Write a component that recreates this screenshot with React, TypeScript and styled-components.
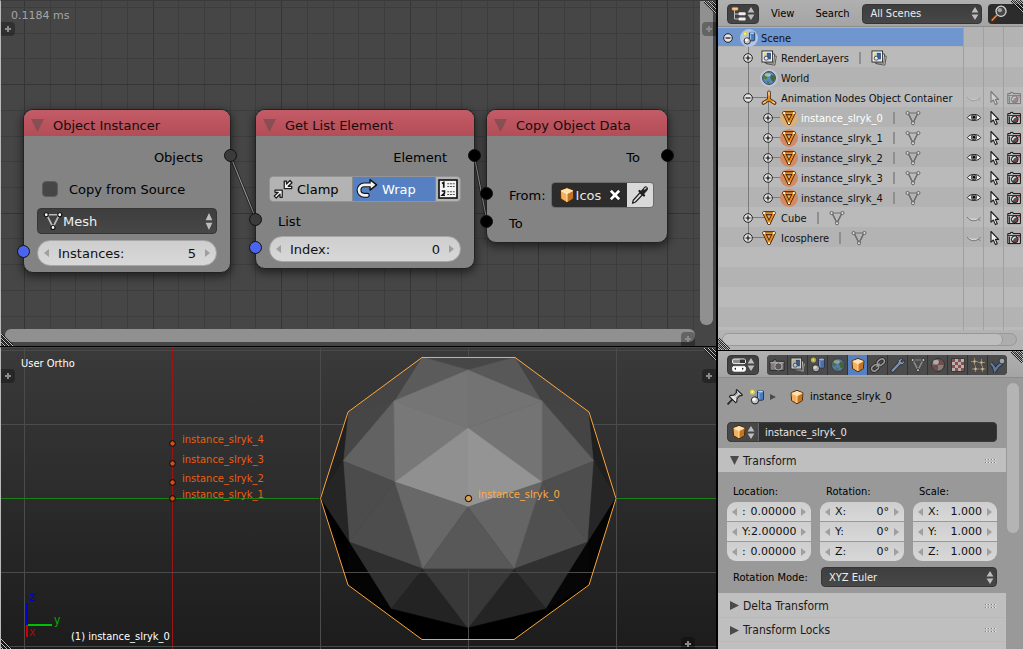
import React from "react";
import styled, { createGlobalStyle, css } from "styled-components";

const Global = createGlobalStyle`
  *, *::before, *::after { box-sizing: border-box; }
  body { margin: 0; background: #000; font-family: "DejaVu Sans Condensed", "DejaVu Sans", sans-serif; font-size: 11px; color: #000; }
  button, input, select { font: inherit; color: inherit; margin: 0; padding: 0; border: 0; background: none; }
  ul { list-style: none; margin: 0; padding: 0; }
  h2, h3, p { margin: 0; font-weight: normal; font-size: inherit; }
  svg { display: block; flex: none; }
`;

/* ---------- icons ---------- */

type IconProps = { size?: number };

const Svg = ({ size = 16, children }: IconProps & { children: React.ReactNode }) => (
  <svg width={size} height={size} viewBox="0 0 16 16" fill="none" aria-hidden="true">
    {children}
  </svg>
);

const CubeIcon = ({ size }: IconProps) => (
  <Svg size={size}>
    <path d="M8 1.4 13.9 3.8 13.4 11.6 8 14.8 2.6 11.6 2.1 3.8Z" fill="#e8963a" stroke="#4a2a08" strokeWidth="1" strokeLinejoin="round" />
    <path d="M8 1.9 13.4 4.1 8 6.8 2.6 4.1Z" fill="#ffe0b0" />
    <path d="M2.6 4.1 8 6.8V14.2L3.1 11.2Z" fill="#f6b05c" />
    <path d="M13.4 4.1 8 6.8V14.2L12.9 11.2Z" fill="#c4741c" />
    <path d="M2.8 4.2 8 6.9 13.2 4.2M8 6.9V14" stroke="#fff1d8" strokeWidth=".8" />
  </Svg>
);

const MeshIcon = ({ size, line = "#6e6e6e", dot = "#d8d8d8", edge = "#5e5e5e" }: IconProps & { line?: string; dot?: string; edge?: string }) => (
  <Svg size={size}>
    <path d="M3 3H13L8 13Z" stroke={line} strokeWidth="1.1" />
    <path d="M3 3 8 13 13 3" stroke={line} strokeWidth="1.3" />
    <circle cx="2.6" cy="3" r="1.6" fill={dot} stroke={edge} strokeWidth=".9" />
    <circle cx="13.4" cy="3" r="1.6" fill={dot} stroke={edge} strokeWidth=".9" />
    <circle cx="8" cy="13.2" r="1.6" fill={dot} stroke={edge} strokeWidth=".9" />
  </Svg>
);

const MeshObjectIcon = ({ size }: IconProps) => (
  <Svg size={size}>
    <path d="M2.4 2.4H13.6L8 14Z" stroke="#2e1600" strokeWidth="4" strokeLinejoin="round" />
    <path d="M2.4 2.4H13.6L8 14Z" stroke="#ee8f22" strokeWidth="2.2" strokeLinejoin="round" />
    <path d="M5.4 4.6H10.6L8 9.8Z" fill="#d8b48c" stroke="#6b3400" strokeWidth=".8" />
    <path d="M2.4 2.4h.01M13.6 2.4h.01M8 14h.01" stroke="#fff" strokeWidth="2.4" strokeLinecap="round" />
  </Svg>
);

const SceneIcon = ({ size }: IconProps) => (
  <Svg size={size}>
    <path d="M8.5 2.2C9.5 1.2 13.5 1.2 14.5 2.2V10.6C13.5 11.6 9.5 11.6 8.5 10.6Z" fill="#4a7cc4" stroke="#1c2f4e" strokeWidth=".9" />
    <ellipse cx="11.5" cy="2.4" rx="2.6" ry="1" fill="#b9d2f2" />
    <path d="M9.8 4V10.4" stroke="#9dbfee" strokeWidth="1.2" />
    <circle cx="3.4" cy="3" r="1.8" fill="#fdfde0" stroke="#d8d23a" strokeWidth="1.5" />
    <circle cx="6" cy="11.4" r="3.6" fill="#c6c6c6" stroke="#1d1d1d" strokeWidth="1" />
    <circle cx="5" cy="10.3" r="1.7" fill="#fff" />
  </Svg>
);

const LayersIcon = ({ size }: IconProps) => (
  <Svg size={size}>
    <path d="M6 5 15.3 6.2 13.8 15.2 5 13.6Z" fill="#e8e4d4" stroke="#333" strokeWidth=".8" />
    <path d="M4 3.4 13.6 4 12.8 13.2 4 12.8Z" fill="#f1efe4" stroke="#333" strokeWidth=".8" />
    <rect x="1" y="1" width="10.6" height="11" fill="#fff" stroke="#222" strokeWidth=".9" />
    <rect x="2.5" y="2.5" width="7.6" height="8" fill="#b6c8df" />
    <rect x="6.5" y="3.2" width="3" height="5.6" fill="#2f61a8" stroke="#16284a" strokeWidth=".5" />
    <circle cx="5.2" cy="8.2" r="2" fill="#eee" stroke="#222" strokeWidth=".7" />
    <circle cx="3.8" cy="3.8" r="1.2" fill="#f2e548" />
  </Svg>
);

const WorldIcon = ({ size }: IconProps) => (
  <Svg size={size}>
    <circle cx="8" cy="8" r="6.4" fill="#5a8cc4" stroke="#22364f" strokeWidth=".9" />
    <path d="M3 4.4C4.6 2.6 7 2 8.6 2.4L8 4.6 5.8 6.2 6.4 8.4 4.6 9.4 2 7.4Z" fill="#4f7a3c" />
    <path d="M10 5 13.4 5.2 14.2 8.4 12.4 11.8 10.6 10.8 9.2 7.6Z" fill="#436b35" />
    <path d="M5.4 10.4 8.4 11 8 13.9 6.2 13.4Z" fill="#557f42" />
    <ellipse cx="6.6" cy="4.8" rx="3" ry="1.8" fill="#fff" opacity=".5" />
  </Svg>
);

const EmptyIcon = ({ size }: IconProps) => (
  <Svg size={size}>
    <path d="M8 2.2V9.4L2.4 13M8 9.4 13.6 13" stroke="#3a1c00" strokeWidth="3.4" strokeLinecap="round" />
    <path d="M8 2.2V9.4L2.4 13M8 9.4 13.6 13" stroke="#e98a1e" strokeWidth="2" strokeLinecap="round" />
    <path d="M8 2.2V5M2.8 12.8 4.4 11.8M13.2 12.8 11.6 11.8" stroke="#ffdba6" strokeWidth="1.2" strokeLinecap="round" />
  </Svg>
);

const EyeIcon = ({ open }: { open: boolean }) => (
  <Svg size={16}>
    {open ? (
      <>
        <path d="M1.4 7.6C4 3.4 12 3.4 14.6 7.6 12 11.4 4 11.4 1.4 7.6Z" fill="#f4f4f4" stroke="#222" strokeWidth="1" />
        <circle cx="8" cy="7.2" r="2.7" fill="#8a8a8a" stroke="#222" strokeWidth=".7" />
        <circle cx="8" cy="7.2" r="1.3" fill="#000" />
      </>
    ) : (
      <>
        <path d="M1.5 7C4 9 12 9 14.5 7 12.8 11.4 4 12 1.5 7Z" fill="#d2d2d2" />
        <path d="M1.2 7C4 12 11 12 14.6 7M12.4 9.4 14.4 10.6" stroke="#747474" strokeWidth="1" />
      </>
    )}
  </Svg>
);

const PointerIcon = () => (
  <Svg size={16}>
    <path d="M5 1.5V12.2L7.4 10 9.4 14.6 11.3 13.8 9.4 9.4H12.6Z" fill="#efefef" stroke="#1c1c1c" strokeWidth="1.1" strokeLinejoin="round" />
  </Svg>
);

const RenderIcon = () => (
  <Svg size={16}>
    <path d="M1.8 3.6H4.5V2.4H7V3.6H14.4V13.6H1.8Z" fill="#cdcdcd" stroke="#111" strokeWidth="1" />
    <path d="M2 5.4H14.4" stroke="#222" strokeWidth="1" />
    <path d="M3.4 6.5V13" stroke="#333" strokeWidth="1.3" />
    <circle cx="8.8" cy="9.4" r="3.4" fill="#4e4e4e" stroke="#111" strokeWidth=".8" />
    <path d="M6.8 10.4A2.4 2.4 0 0 1 9.8 7.4" stroke="#d6e2ee" strokeWidth="1.5" />
    <circle cx="10.2" cy="10.6" r="1" fill="#a33" />
    <circle cx="13" cy="6.8" r=".9" fill="#d02020" />
  </Svg>
);

const CameraTabIcon = () => (
  <Svg size={16}>
    <path d="M1 4.4H4L5 2.6H7L7.6 4.4H15V13.4H1Z" fill="#8f8f8f" stroke="#161616" strokeWidth=".9" />
    <path d="M1.4 4.9H14.6V6.4H1.4Z" fill="#c2c2c2" />
    <circle cx="9.4" cy="9.4" r="3.6" fill="#5a5a5a" stroke="#d0d0d0" strokeWidth="1" />
    <circle cx="9.4" cy="9.4" r="1.6" fill="#8a5050" />
  </Svg>
);

const ChainIcon = () => (
  <Svg size={16}>
    <g stroke="#1d1d1d" strokeWidth="3.2">
      <rect x="7.2" y="2.6" width="7.4" height="5" rx="2.5" transform="rotate(-38 10.9 5.1)" />
      <rect x="1.4" y="8.4" width="7.4" height="5" rx="2.5" transform="rotate(-38 5.1 10.9)" />
    </g>
    <g stroke="#b3b3b3" strokeWidth="1.5">
      <rect x="7.2" y="2.6" width="7.4" height="5" rx="2.5" transform="rotate(-38 10.9 5.1)" />
      <rect x="1.4" y="8.4" width="7.4" height="5" rx="2.5" transform="rotate(-38 5.1 10.9)" />
      <path d="M6.4 9.8 9.6 6.4" />
    </g>
  </Svg>
);

const WrenchIcon = () => (
  <Svg size={16}>
    <path d="M2.6 13.6 8.6 7.2" stroke="#1a2330" strokeWidth="4" strokeLinecap="round" />
    <path d="M13 1.8 10.8 4.2 12 5.4 14.4 3.2C15.2 5.4 13.6 8 11 7.8 8.4 7.6 7.4 5.6 8.4 3.6 9.4 1.8 11.4 1.2 13 1.8Z" fill="#9cb4d4" stroke="#1a2330" strokeWidth=".9" />
    <path d="M2.6 13.6 9.2 6.6" stroke="#8ba5c8" strokeWidth="2.4" strokeLinecap="round" />
  </Svg>
);

const MaterialIcon = () => (
  <Svg size={16}>
    <circle cx="8" cy="8" r="6.3" fill="#9a8c8c" stroke="#161616" strokeWidth=".9" />
    <path d="M8 1.9A6.1 6.1 0 0 1 14.1 8H8ZM8 8V14.1A6.1 6.1 0 0 1 1.9 8Z" fill="#7d4c4c" />
    <ellipse cx="6" cy="5" rx="3" ry="2.2" fill="#e6e6e6" opacity=".7" />
  </Svg>
);

const TextureIcon = () => (
  <Svg size={16}>
    <rect x="1.6" y="1.6" width="12.8" height="12.8" fill="#d9d2d0" stroke="#222" strokeWidth=".8" />
    {[0, 1, 2, 3].map((r) =>
      [0, 1].map((c) => <rect key={`${r}${c}`} x={2 + c * 6 + (r % 2) * 3} y={2 + r * 3} width="3" height="3" fill="#a2504c" />),
    )}
  </Svg>
);

const ParticlesIcon = () => (
  <Svg size={16}>
    <path d="M4.5 1V8M1 4.5H8M11.5 2V9M8 5.5H15M5.5 8.5V15M2 12H9M12.5 8.8V15M9.6 12H15.6" stroke="#b49a6a" strokeWidth="1.1" />
    <path d="M4.5 3.4V5.6M11.5 4.4V6.6M5.5 11V13M12.5 11V13" stroke="#efe2bd" strokeWidth="2" />
  </Svg>
);

const PhysicsIcon = () => (
  <Svg size={16}>
    <path d="M1 6.4C3 8 4.4 11 5 13.4 7 9.6 9.4 7.6 12 6" stroke="#16202e" strokeWidth="4" />
    <path d="M1 6.4C3 8 4.4 11 5 13.2 7 9.6 9.4 7.6 12 6" stroke="#6488b4" strokeWidth="2.4" />
    <circle cx="12" cy="4" r="2.9" fill="#b4bfcb" stroke="#1b1b1b" strokeWidth=".8" />
  </Svg>
);

const PinIcon = () => (
  <Svg size={18}>
    <path d="M1.4 14.6 6 9.8" stroke="#222" strokeWidth="1.5" />
    <path d="M9.6 1.4 14.6 6.2 13.4 7 12.4 6.6 9.8 9.4 9.6 12.2 8.6 13 3 7.6 4 6.6 7 6.4 9.4 3.8 9 2.4Z" fill="#e4e4e4" stroke="#1f1f1f" strokeWidth="1" strokeLinejoin="round" />
    <path d="M7.6 7.2 10.6 4.2M8.8 9 11.8 5.8" stroke="#8a8a8a" strokeWidth=".9" />
  </Svg>
);

const MagnifierIcon = () => (
  <Svg size={18}>
    <path d="M1.8 14 6.4 9" stroke="#56290f" strokeWidth="3.2" strokeLinecap="round" />
    <path d="M2 13.4 5.6 9.6" stroke="#e08a5c" strokeWidth="1.4" strokeLinecap="round" />
    <circle cx="9.8" cy="5.6" r="4.5" fill="#474747" stroke="#dadada" strokeWidth="1.1" />
    <circle cx="8.8" cy="4.6" r="1.9" fill="#a4a4a4" />
  </Svg>
);

const OutlinerIcon = () => (
  <Svg size={16}>
    <path d="M3.5 4V13M3.5 8H8M3.5 13H8" stroke="#bdbdbd" strokeWidth="1" />
    <rect x="1" y="1.4" width="6" height="2.8" rx="1" fill="#ffc489" stroke="#d98a3a" strokeWidth=".5" />
    <rect x="7.6" y="6.2" width="7" height="3" rx="1" fill="#efefef" />
    <rect x="7.6" y="11.4" width="7" height="3" rx="1" fill="#efefef" />
  </Svg>
);

const PropertiesIcon = () => (
  <Svg size={16}>
    <rect x="1.5" y="2" width="13" height="4.6" rx="1.6" fill="#8e8e8e" stroke="#f0f0f0" strokeWidth="1" />
    <rect x="9" y="2.6" width="5" height="3.4" fill="#333" />
    <rect x="1.5" y="9.4" width="13" height="4.8" rx="1.6" fill="#fff" stroke="#f0f0f0" strokeWidth="1" />
    <path d="M3.2 11.8 5 10.6V13ZM12.8 11.8 11 10.6V13Z" fill="#222" />
  </Svg>
);

const ClampIcon = () => (
  <Svg size={20}>
    <g stroke="#1d1d1d" strokeWidth="1" fill="#f2f2f2" strokeLinejoin="round">
      <path d="M9 1.6V7.6H15V5.8H12.2L15.2 3 13.6 1.2 10.8 4V1.6Z" />
      <path d="M7.4 14.6V8.8H1.6V10.6H4.2L1 13.6 2.6 15.2 5.6 12.2V14.6Z" />
    </g>
  </Svg>
);

const WrapIcon = () => (
  <Svg size={22}>
    <path d="M12 5H6A3.8 3.8 0 0 0 6 12.6H8.2" stroke="#111" strokeWidth="3.6" strokeLinecap="round" />
    <path d="M10.2 1.2 15 5 10.2 8.8Z" fill="#f2f2f2" stroke="#111" strokeWidth="1" strokeLinejoin="round" />
    <path d="M12 5H6A3.8 3.8 0 0 0 6 12.6H8.2" stroke="#f2f2f2" strokeWidth="2" strokeLinecap="round" />
  </Svg>
);

const NumberedListIcon = () => (
  <Svg size={20}>
    <rect x=".8" y=".8" width="14.4" height="14.4" fill="#f4f4f4" stroke="#111" strokeWidth="1.3" />
    <path d="M3.2 3.6 4.6 2.8V7M3 9.6H5.2V11.2L3.4 13H5.6" stroke="#111" strokeWidth="1.3" />
    <path d="M7.4 3.8H13.4M7.4 6H13.4M7.4 10.2H13.4M7.4 12.4H13.4" stroke="#555" strokeWidth=".9" strokeDasharray="1.6 .6" />
  </Svg>
);

const CrossIcon = () => (
  <Svg size={16}>
    <path d="M4 4 12 12M12 4 4 12" stroke="#000" strokeWidth="4.2" />
    <path d="M3.8 3.8 12.2 12.2M12.2 3.8 3.8 12.2" stroke="#fff" strokeWidth="2.8" />
  </Svg>
);

const EyedropperIcon = () => (
  <Svg size={20}>
    <path d="M2 14.6 2.6 12.2 8.2 6 10 7.8 4.4 13.6Z" fill="#e4e4e4" stroke="#222" strokeWidth="1" strokeLinejoin="round" />
    <path d="M7.6 4.8 11.2 8.4" stroke="#1c1c1c" strokeWidth="1.8" strokeLinecap="round" />
    <path d="M9.8 6.2 12.6 3" stroke="#222" strokeWidth="3.6" strokeLinecap="round" />
    <path d="M11.6 3.2 12.8 2.4" stroke="#ccc" strokeWidth="1.1" strokeLinecap="round" />
  </Svg>
);

const UpDownIcon = ({ tall }: { tall?: boolean }) => (
  <svg width="8" height={tall ? 17 : 13} viewBox="0 0 8 14" preserveAspectRatio="none" aria-hidden="true">
    <path d="M4 0 7.4 6H.6ZM4 14 7.4 8H.6Z" fill="#bdbdbd" />
  </svg>
);

const Arrow = ({ right }: { right?: boolean }) => (
  <svg width="5" height="8" viewBox="0 0 5 8" aria-hidden="true">
    <path d={right ? "M0 0 5 4 0 8Z" : "M5 0 0 4 5 8Z"} fill="#9f9f9f" />
  </svg>
);

const Triangle = ({ open, size = 10 }: { open?: boolean; size?: number }) => (
  <svg width={size} height={size} viewBox="0 0 10 10" aria-hidden="true">
    <path d={open ? "M0 0H10L5 10Z" : "M0 0 10 5 0 10Z"} fill="#4a4a4a" />
  </svg>
);

const ToggleIcon = ({ open }: { open: boolean }) => (
  <svg width="10" height="10" viewBox="0 0 10 10" aria-hidden="true">
    <circle cx="5" cy="5" r="4.3" fill="#e6e6e6" stroke="#1d1d1d" strokeWidth="1" />
    <path d={open ? "M2.5 5H7.5" : "M2.5 5H7.5M5 2.5V7.5"} stroke="#111" strokeWidth="1.2" />
  </svg>
);

const GripIcon = () => (
  <svg width="11" height="4" viewBox="0 0 11 4" aria-hidden="true">
    {[0, 3, 6, 9].map((x) => (
      <g key={x}>
        <path d={`M${x} .5H${x + 1}M${x} 3.5H${x + 1}`} stroke="#7d7d7d" />
        <path d={`M${x + 1} .5H${x + 2}M${x + 1} 3.5H${x + 2}`} stroke="#ececec" />
      </g>
    ))}
  </svg>
);

/* ---------- page frame ---------- */

const Screen = styled.main`
  display: grid;
  grid-template-columns: minmax(0, 1fr) 305px;
  column-gap: 2px;
  min-height: 100vh;
`;

const Column = styled.div<{ $rows: string }>`
  display: grid;
  grid-template-rows: ${(p) => p.$rows};
  row-gap: 1px;
  min-width: 0;
`;

const Area = styled.section`
  position: relative;
  overflow: hidden;
`;

const CornerSvg = styled.svg<{ $at: "tr" | "bl" }>`
  position: absolute;
  z-index: 3;
  ${(p) => (p.$at === "tr" ? "top: 0; right: 0;" : "bottom: 0; left: 0;")}
`;

const Corner = ({ at }: { at: "tr" | "bl" }) => (
  <CornerSvg $at={at} width="12" height="12" viewBox="0 0 12 12" aria-hidden="true">
    {(at === "tr" ? ["M0 0 12 12", "M4 0 12 8", "M8 0 12 4"] : ["M0 0 12 12", "M0 4 8 12", "M0 8 4 12"]).map((d) => (
      <g key={d}>
        <path d={d} stroke="#111" strokeWidth="2" />
        <path d={d} stroke="#c4c4c4" strokeWidth="1" />
      </g>
    ))}
  </CornerSvg>
);

const PlusButton = styled.button<{ $side: "left" | "right" | "bottom" }>`
  position: absolute;
  z-index: 2;
  display: grid;
  place-items: center;
  width: 14px;
  height: 14px;
  background: rgba(0, 0, 0, 0.3);
  border-radius: ${(p) => (p.$side === "left" ? "0 4px 4px 0" : p.$side === "right" ? "4px 0 0 4px" : "4px 4px 0 0")};
  ${(p) => p.$side === "left" && "left: 0; top: 21px;"}
  ${(p) => p.$side === "right" && "right: 0; top: 21px;"}
  ${(p) => p.$side === "bottom" && "right: 21px; bottom: 0;"}
`;

const Plus = ({ side }: { side: "left" | "right" | "bottom" }) => (
  <PlusButton $side={side} type="button" aria-label="Show region">
    <svg width="6" height="6" viewBox="0 0 6 6" aria-hidden="true">
      <path d="M3 0V6M0 3H6" stroke="#8a8a8a" strokeWidth="2" />
    </svg>
  </PlusButton>
);

/* ---------- node editor ---------- */

const NodeArea = styled(Area)`
  display: grid;
  grid-template-columns: minmax(0, 1fr) 16px;
  grid-template-rows: minmax(0, 1fr) 17px;
  background: #464646;
  border-left: 1px solid #b9b9b9;
  border-top: 1px solid #3a3a3a;
`;

const Canvas = styled.div`
  position: relative;
  overflow: hidden;
`;

const CanvasDrawing = styled.svg`
  position: absolute;
  inset: 0;
  width: 100%;
  height: 100%;
`;

const Timing = styled.p`
  position: absolute;
  left: 10px;
  top: 8px;
  font-family: "DejaVu Sans", sans-serif;
  line-height: 14px;
  color: #a5a5a5;
`;

const VerticalBar = styled.div`
  margin: 0 3px 4px 0;
  background: #909090;
  border-radius: 0 0 6px 6px;
`;

const HorizontalBar = styled.div`
  margin: 0 5px 4px 4px;
  background: #909090;
  border-radius: 6px;
`;

const NodeCard = styled.article<{ $x: number; $width: number }>`
  position: absolute;
  top: 108px;
  left: ${(p) => p.$x}px;
  width: ${(p) => p.$width}px;
  font-family: "DejaVu Sans", sans-serif;
  font-size: 13px;
  background: #838383;
  border: 1px solid #222;
  border-radius: 10px;
  box-shadow: 0 3px 8px 1px rgba(0, 0, 0, 0.5);
`;

const NodeHeader = styled.header`
  display: flex;
  align-items: center;
  gap: 9px;
  height: 26px;
  padding: 5px 7px 0;
  color: #1a0a0b;
  background: linear-gradient(#c35c66, #bb545e 50%, #b34d57);
  border-radius: 9px 9px 0 0;
  svg { opacity: 0.45; }
`;

const NodeTitle = styled.h2`
  line-height: 16px;
`;

const NodeBody = styled.div`
  display: flex;
  flex-direction: column;
  gap: 6px;
  padding: 8px 13px 6px;
`;

const NodeGroup = styled.div<{ $spaced?: boolean }>`
  display: flex;
  flex-direction: column;
  gap: 2px;
  padding-top: ${(p) => (p.$spaced ? 6 : 0)}px;
`;

const NodeRow = styled.div<{ $kind?: "output" | "input" | "check" }>`
  position: relative;
  display: flex;
  align-items: center;
  height: 26px;
  ${(p) => p.$kind === "output" && "justify-content: flex-end; padding-right: 14px;"}
  ${(p) => p.$kind === "input" && "padding-left: 9px;"}
  ${(p) => p.$kind === "check" && "padding-left: 5px; gap: 11px;"}
`;

const Socket = styled.span<{ $side: "in" | "out"; $color: string }>`
  position: absolute;
  top: 5px;
  ${(p) => (p.$side === "in" ? "left: -20px;" : "right: -20px;")}
  width: 13px;
  height: 13px;
  background: ${(p) => p.$color};
  border: 1px solid #111;
  border-radius: 50%;
`;

const CheckBox = styled.input`
  appearance: none;
  width: 16px;
  height: 16px;
  background: #464646;
  border: 1px solid #5c5c5c;
  border-radius: 4px;
`;

const darkWidget = css`
  background: linear-gradient(#3e3e3e, #474747);
  border: 1px solid #353535;
  color: #eee;
`;

const SelectBox = styled.div<{ $large?: boolean }>`
  position: relative;
  flex: 1;
  display: flex;
  align-items: center;
  height: ${(p) => (p.$large ? 26 : 20)}px;
  padding: 0 ${(p) => (p.$large ? 3 : 2)}px 0 ${(p) => (p.$large ? 5 : 7)}px;
  border-radius: 4px;
  ${darkWidget}
  select { flex: 1; min-width: 0; appearance: none; outline: 0; height: 100%; }
`;

const NumberField = styled.label<{ $large?: boolean; $place?: "top" | "middle" | "bottom" }>`
  flex: 1 0 auto;
  display: flex;
  align-items: center;
  gap: ${(p) => (p.$large ? 9 : 5)}px;
  min-width: 0;
  height: ${(p) => (p.$large ? 26 : 19)}px;
  padding: 0 ${(p) => (p.$large ? 6 : 5)}px;
  font-family: "DejaVu Sans", sans-serif;
  color: #111;
  background: linear-gradient(#cecece, #d8d8d8);
  border: ${(p) => (p.$large ? "1px solid #a6a6a6" : 0)};
  border-radius: ${(p) => (p.$large ? "13px" : p.$place === "top" ? "9px 9px 0 0" : p.$place === "bottom" ? "0 0 9px 9px" : 0)};
`;

const FieldText = styled.span`
  flex: 1;
  display: flex;
  min-width: 0;
  input { flex: 1; width: 0; min-width: 0; text-align: right; outline: 0; }
`;

const ButtonGroup = styled.div`
  flex: 1;
  display: flex;
  height: 26px;
  border: 1px solid #949494;
  border-radius: 4px;
  overflow: hidden;
`;

const ChoiceButton = styled.button<{ $active?: boolean; $narrow?: boolean }>`
  display: flex;
  align-items: center;
  gap: 4px;
  ${(p) => (p.$narrow ? "width: 25px; justify-content: center;" : "flex: 1; padding-left: 3px;")}
  color: ${(p) => (p.$active ? "#fff" : "#000")};
  background: ${(p) => (p.$active ? "#5680c2" : "#b3b3b3")};
  & + & { border-left: 1px solid #8a8a8a; }
`;

const DataField = styled.div`
  flex: 1;
  display: flex;
  min-width: 0;
  height: 26px;
  margin-left: 5px;
  border: 1px solid #6a6a6a;
  border-radius: 4px;
  overflow: hidden;
`;

const DataName = styled.div`
  flex: 1;
  display: flex;
  align-items: center;
  min-width: 0;
  padding: 0 4px 0 6px;
  color: #e6e6e6;
  background: #2c2c2c;
  input { flex: 1; width: 0; min-width: 0; outline: 0; }
`;

const PickButton = styled.button`
  display: grid;
  place-items: center;
  width: 26px;
  background: #d9d9d9;
`;

const NumberInput = ({ label, value, large, place }: { label: string; value: string; large?: boolean; place?: "top" | "middle" | "bottom" }) => (
  <NumberField $large={large} $place={place}>
    <Arrow />
    <FieldText>
      {label}
      <input type="text" defaultValue={value} />
    </FieldText>
    <Arrow right />
  </NumberField>
);

const gridX = Array.from({ length: 80 }, (_, i) => ({ at: Math.round(23 + i * 25.72), major: i % 5 === 0 }));
const gridY = Array.from({ length: 60 }, (_, i) => ({ at: Math.round(6 + i * 25.72), major: i % 5 === 3 }));

const NodeEditor = () => (
  <NodeArea aria-label="Node editor">
    <Canvas>
      <CanvasDrawing aria-hidden="true">
        <g stroke="#3d3d3d" shapeRendering="crispEdges">
          {gridX.map((l) => (
            <line key={l.at} x1={l.at + 0.5} x2={l.at + 0.5} y1="0" y2="100%" stroke={l.major ? "#353535" : undefined} />
          ))}
          {gridY.map((l) => (
            <line key={l.at} y1={l.at + 0.5} y2={l.at + 0.5} x1="0" x2="100%" stroke={l.major ? "#353535" : undefined} />
          ))}
        </g>
        <path d="M229 154 255 218M473 154 486 220" stroke="#2c2c2c" strokeWidth="3" />
        <path d="M229 154 255 218M473 154 486 220" stroke="#a0a0a0" strokeWidth="1" />
      </CanvasDrawing>
      <Timing>0.1184 ms</Timing>

      <NodeCard $x={22} $width={208}>
        <NodeHeader>
          <Triangle open size={13} />
          <NodeTitle>Object Instancer</NodeTitle>
        </NodeHeader>
        <NodeBody>
          <NodeRow $kind="output">
            Objects
            <Socket $side="out" $color="#3b3b3b" />
          </NodeRow>
          <NodeRow $kind="check">
            <CheckBox type="checkbox" id="copy-source" />
            <label htmlFor="copy-source">Copy from Source</label>
          </NodeRow>
          <NodeRow>
            <SelectBox $large>
              <MeshIcon size={20} line="#b8b8b8" dot="#fff" edge="#111" />
              <select aria-label="Object type" defaultValue="Mesh">
                <option>Mesh</option>
              </select>
              <UpDownIcon tall />
            </SelectBox>
          </NodeRow>
          <NodeRow>
            <Socket $side="in" $color="#4a63f2" />
            <NumberInput large label="Instances:" value="5" />
          </NodeRow>
        </NodeBody>
      </NodeCard>

      <NodeCard $x={254} $width={220}>
        <NodeHeader>
          <Triangle open size={13} />
          <NodeTitle>Get List Element</NodeTitle>
        </NodeHeader>
        <NodeBody>
          <NodeRow $kind="output">
            Element
            <Socket $side="out" $color="#000" />
          </NodeRow>
          <NodeRow>
            <ButtonGroup>
              <ChoiceButton type="button">
                <ClampIcon />
                Clamp
              </ChoiceButton>
              <ChoiceButton type="button" $active>
                <WrapIcon />
                Wrap
              </ChoiceButton>
              <ChoiceButton type="button" $narrow aria-label="Index list">
                <NumberedListIcon />
              </ChoiceButton>
            </ButtonGroup>
          </NodeRow>
          <NodeGroup>
            <NodeRow $kind="input">
              <Socket $side="in" $color="#3b3b3b" />
              List
            </NodeRow>
            <NodeRow>
              <Socket $side="in" $color="#4a63f2" />
              <NumberInput large label="Index:" value="0" />
            </NodeRow>
          </NodeGroup>
        </NodeBody>
      </NodeCard>

      <NodeCard $x={485} $width={182}>
        <NodeHeader>
          <Triangle open size={13} />
          <NodeTitle>Copy Object Data</NodeTitle>
        </NodeHeader>
        <NodeBody>
          <NodeRow $kind="output">
            To
            <Socket $side="out" $color="#000" />
          </NodeRow>
          <NodeGroup $spaced>
            <NodeRow $kind="input">
              <Socket $side="in" $color="#000" />
              <label htmlFor="from-object">From:</label>
              <DataField>
                <DataName>
                  <CubeIcon size={18} />
                  <input id="from-object" type="text" defaultValue="Icos" />
                  <button type="button" aria-label="Clear object">
                    <CrossIcon />
                  </button>
                </DataName>
                <PickButton type="button" aria-label="Pick object">
                  <EyedropperIcon />
                </PickButton>
              </DataField>
            </NodeRow>
            <NodeRow $kind="input">
              <Socket $side="in" $color="#000" />
              To
            </NodeRow>
          </NodeGroup>
        </NodeBody>
      </NodeCard>
    </Canvas>
    <VerticalBar />
    <HorizontalBar />
    <Plus side="left" />
    <Plus side="right" />
    <Plus side="bottom" />
    <Corner at="bl" />
    <Corner at="tr" />
  </NodeArea>
);

/* ---------- 3D view ---------- */

const ViewArea = styled(Area)`
  background: linear-gradient(#3a3a3a, #1c1c1c);
  border-left: 1px solid #b9b9b9;
  border-top: 1px solid #4a4a4a;
`;

const ViewText = styled.p<{ $x: number; $y: number; $color?: string }>`
  position: absolute;
  left: ${(p) => p.$x}px;
  top: ${(p) => p.$y}px;
  line-height: 14px;
  color: ${(p) => p.$color ?? "#fff"};
  white-space: nowrap;
`;

const AxisText = styled.text`
  font-size: 12px;
`;

const faces: [string, string][] = [
  ["422,357 515,357 468,370", "#474747"],
  ["422,357 468,370 394,401", "#5b5b5b"],
  ["515,357 468,370 542,401", "#585858"],
  ["422,357 394,401 348,412", "#454545"],
  ["515,357 542,401 589,412", "#434343"],
  ["348,412 394,401 343,461", "#464646"],
  ["589,412 542,401 594,461", "#444444"],
  ["348,412 343,461 320,498", "#202020"],
  ["589,412 594,461 616,498", "#1f1f1f"],
  ["343,461 394,401 395,482", "#626262"],
  ["594,461 542,401 542,482", "#606060"],
  ["394,401 468,370 468,428", "#757575"],
  ["542,401 468,370 468,428", "#737373"],
  ["394,401 468,428 395,482", "#787878"],
  ["542,401 468,428 542,482", "#747474"],
  ["468,428 468,507 395,482", "#909090"],
  ["468,428 468,507 542,482", "#949494"],
  ["343,461 395,482 349,542", "#4c4c4c"],
  ["594,461 542,482 588,542", "#4e4e4e"],
  ["395,482 349,542 423,569", "#4d4d4d"],
  ["542,482 588,542 514,569", "#505050"],
  ["395,482 468,507 423,569", "#686868"],
  ["542,482 468,507 514,569", "#656565"],
  ["468,507 423,569 514,569", "#585858"],
  ["320,498 343,461 349,542", "#252525"],
  ["616,498 594,461 588,542", "#262626"],
  ["320,498 349,542 348,585", "#000000"],
  ["616,498 588,542 589,585", "#040404"],
  ["349,542 423,569 391,609", "#2f2f2f"],
  ["588,542 514,569 546,609", "#303030"],
  ["349,542 348,585 391,609", "#040404"],
  ["588,542 589,585 546,609", "#060606"],
  ["423,569 391,609 468,628", "#232323"],
  ["514,569 546,609 468,628", "#242424"],
  ["423,569 514,569 468,628", "#383838"],
  ["348,585 391,609 468,628 546,609 589,585 514,639 422,639", "#000000"],
];

const origins = [443, 463, 482, 498];

const View3D = () => (
  <ViewArea aria-label="3D view">
    <CanvasDrawing aria-hidden="true">
      <g transform="translate(-1 -348)">
        <g stroke="#4b4b4b" fill="none" shapeRendering="crispEdges">
          <path d="M24.5 348V2000M320.5 348V2000M468.5 348V2000M616.5 348V2000M0 350.5H3000M0 424.5H3000" />
          <path d="M0 498.5H3000" stroke="#1a801a" />
          <path d="M172.5 348V2000" stroke="#9c1414" />
        </g>
        {faces.map(([points, fill]) => (
          <polygon key={points} points={points} fill={fill} stroke={fill} strokeWidth=".6" />
        ))}
        <path d="M0 572.5H3000M0 646.5H3000M468.5 570V2000" stroke="#4b4b4b" shapeRendering="crispEdges" />
        <polygon
          points="422,357.5 515,357.5 589,412 616,498.5 589,585 514,639.5 422,639.5 348,585 320.5,498.5 348,412"
          stroke="#ffa63a"
          fill="none"
        />
        {origins.map((y) => (
          <circle key={y} cx="172.5" cy={y + 0.5} r="2.8" fill="#c9501a" stroke="#000" />
        ))}
        <circle cx="468.5" cy="498.5" r="3.2" fill="#e0a050" stroke="#000" />
        <path d="M27 603V625" stroke="#0000c8" strokeWidth="2" />
        <path d="M28 625H52" stroke="#00c000" strokeWidth="2" />
        <path d="M27 625V637" stroke="#d00000" strokeWidth="2" />
        <AxisText x="29" y="601" fill="#0000c8">z</AxisText>
        <AxisText x="54" y="624" fill="#00b000">y</AxisText>
        <AxisText x="29" y="636" fill="#b80000">x</AxisText>
      </g>
    </CanvasDrawing>
    <ViewText as="h2" $x={20} $y={9}>User Ortho</ViewText>
    <ViewText $x={181} $y={85} $color="#ee5c0e">instance_slryk_4</ViewText>
    <ViewText $x={181} $y={105} $color="#ee5c0e">instance_slryk_3</ViewText>
    <ViewText $x={181} $y={124} $color="#ee5c0e">instance_slryk_2</ViewText>
    <ViewText $x={181} $y={140} $color="#ee5c0e">instance_slryk_1</ViewText>
    <ViewText $x={477} $y={140} $color="#ffaa40">instance_slryk_0</ViewText>
    <ViewText $x={70} $y={282}>(1) instance_slryk_0</ViewText>
    <Plus side="left" />
    <Plus side="right" />
    <Plus side="bottom" />
    <Corner at="bl" />
    <Corner at="tr" />
  </ViewArea>
);

/* ---------- outliner ---------- */

const OutlinerArea = styled(Area)`
  display: flex;
  flex-direction: column;
  background: #b3b3b3;
`;

const Header = styled.header`
  display: flex;
  align-items: center;
  height: 27px;
  padding: 1px 0 0 9px;
  background: linear-gradient(#b0b0b0, #a4a4a4);
  border-bottom: 1px solid #8c8c8c;
`;

const EditorButton = styled.button`
  display: flex;
  align-items: center;
  justify-content: space-between;
  width: 32px;
  height: 20px;
  padding: 0 3px;
  border-radius: 4px;
  ${darkWidget}
`;

const MenuButton = styled.button`
  padding: 0 8px;
  line-height: 20px;
`;

const HeaderMenu = styled.nav`
  display: flex;
  gap: 5px;
  margin: 0 5px 0 4px;
`;

const SearchBox = styled.label`
  display: flex;
  align-items: center;
  width: 35px;
  height: 20px;
  margin-left: 6px;
  padding-left: 2px;
  background: #2c2c2c;
  border-radius: 4px 0 0 4px;
  input { flex: 1; width: 0; min-width: 0; color: #eee; outline: 0; }
`;

const Tree = styled.ul`
  position: relative;
  flex: 1;
  min-height: 303px;
  padding-top: 1px;
  background: repeating-linear-gradient(#b3b3b3 0 20px, #bababa 20px 40px);
`;

const TreeLines = styled.svg`
  position: absolute;
  left: 0;
  top: 0;
`;

const Columns = styled.div`
  position: absolute;
  inset: 0 0 0 auto;
  width: 60px;
  display: grid;
  grid-template-columns: repeat(3, 20px);
  span { border-left: 1px solid #a0a0a0; }
`;

const TreeRow = styled.li<{ $selected?: boolean; $active?: boolean }>`
  position: relative;
  display: flex;
  align-items: center;
  height: 20px;
  color: ${(p) => (p.$active ? "#fff" : "#111")};
  background: ${(p) => (p.$selected ? "linear-gradient(#7096d0, #7096d0) 0 0 / calc(100% - 60px) 18px no-repeat" : "none")};
`;

const TreeItem = styled.div<{ $depth: number }>`
  flex: 1;
  display: flex;
  align-items: center;
  min-width: 0;
  padding-left: ${(p) => p.$depth * 20}px;
  white-space: nowrap;
`;

const Toggle = styled.button`
  display: grid;
  place-items: center;
  flex: none;
  width: 20px;
  height: 20px;
`;

const IconSlot = styled.span<{ $halo?: string }>`
  display: grid;
  place-items: center;
  flex: none;
  width: 18px;
  height: 18px;
  margin: 0 3px 0 2px;
  border-radius: 50%;
  background: ${(p) => p.$halo ?? "none"};
`;

const Divider = styled.span`
  width: 2px;
  height: 12px;
  margin: 0 10px;
  background: #8f8f8f;
`;

const Restrict = styled.button<{ $dim?: boolean }>`
  display: grid;
  place-items: center;
  flex: none;
  width: 20px;
  height: 20px;
  padding-left: 1px;
  opacity: ${(p) => (p.$dim ? 0.4 : 1)};
`;

const TreeScroll = styled.div`
  margin: 3px 6px 4px 4px;
  padding-right: 13px;
  height: 13px;
  border: 1px solid #989898;
  border-radius: 7px;
  background: #adadad;
`;

const TreeThumb = styled.div`
  height: 11px;
  background: #bebebe;
  border-right: 1px solid #989898;
  border-radius: 6px;
`;

type Row = {
  name: string;
  depth: number;
  icon: React.ReactNode;
  halo?: string;
  toggle?: "open" | "closed";
  data?: React.ReactNode;
  restrict?: { visible: boolean; dim?: boolean };
  selected?: boolean;
  active?: boolean;
};

const orangeHalo = "#d28a64";

const rows: Row[] = [
  { name: "Scene", depth: 0, icon: <SceneIcon size={14} />, halo: "#b4c4e2", toggle: "open", selected: true },
  { name: "RenderLayers", depth: 1, icon: <LayersIcon />, toggle: "closed", data: <LayersIcon /> },
  { name: "World", depth: 1, icon: <WorldIcon size={16} />, halo: "#c3c4d4" },
  { name: "Animation Nodes Object Container", depth: 1, icon: <EmptyIcon />, toggle: "open", restrict: { visible: false, dim: true } },
  { name: "instance_slryk_0", depth: 2, icon: <MeshObjectIcon size={14} />, halo: "#d8b078", toggle: "closed", data: <MeshIcon />, restrict: { visible: true }, active: true },
  ...[1, 2, 3, 4].map(
    (n): Row => ({
      name: `instance_slryk_${n}`,
      depth: 2,
      icon: <MeshObjectIcon size={14} />,
      halo: orangeHalo,
      toggle: "closed",
      data: <MeshIcon />,
      restrict: { visible: true },
    }),
  ),
  { name: "Cube", depth: 1, icon: <MeshObjectIcon size={14} />, toggle: "closed", data: <MeshIcon />, restrict: { visible: false } },
  { name: "Icosphere", depth: 1, icon: <MeshObjectIcon size={14} />, toggle: "closed", data: <MeshIcon />, restrict: { visible: false } },
];

const Outliner = () => (
  <OutlinerArea aria-label="Outliner">
    <Header>
      <EditorButton type="button" aria-label="Editor type: Outliner">
        <OutlinerIcon />
        <UpDownIcon />
      </EditorButton>
      <HeaderMenu>
        <MenuButton type="button">View</MenuButton>
        <MenuButton type="button">Search</MenuButton>
      </HeaderMenu>
      <SelectBox>
        <select aria-label="Display mode" defaultValue="All Scenes">
          <option>All Scenes</option>
        </select>
        <UpDownIcon />
      </SelectBox>
      <SearchBox>
        <MagnifierIcon />
        <input type="text" aria-label="Filter" />
      </SearchBox>
    </Header>
    <Tree>
      <Columns aria-hidden="true">
        <span />
        <span />
        <span />
      </Columns>
      <TreeLines width="80" height="240" aria-hidden="true">
        <path d="M10 10.5H30M30.5 10V210.5H51M30 70.5H51M30 190.5H51M50.5 70V170.5H71M50 90.5H71M50 110.5H71M50 130.5H71M50 150.5H71" stroke="#7b7b7b" fill="none" />
      </TreeLines>
      {rows.map((row) => (
        <TreeRow key={row.name} $selected={row.selected} $active={row.active}>
          <TreeItem $depth={row.depth}>
            {row.toggle ? (
              <Toggle type="button" aria-label={row.toggle === "open" ? "Collapse" : "Expand"}>
                <ToggleIcon open={row.toggle === "open"} />
              </Toggle>
            ) : (
              <Toggle as="span" />
            )}
            <IconSlot $halo={row.halo}>{row.icon}</IconSlot>
            {row.name}
            {row.data && (
              <>
                <Divider />
                {row.data}
              </>
            )}
          </TreeItem>
          {row.restrict && (
            <>
              <Restrict type="button" aria-label="Visibility" $dim={row.restrict.dim}>
                <EyeIcon open={row.restrict.visible} />
              </Restrict>
              <Restrict type="button" aria-label="Selectable" $dim={row.restrict.dim}>
                <PointerIcon />
              </Restrict>
              <Restrict type="button" aria-label="Renderable" $dim={row.restrict.dim}>
                <RenderIcon />
              </Restrict>
            </>
          )}
        </TreeRow>
      ))}
    </Tree>
    <TreeScroll>
      <TreeThumb />
    </TreeScroll>
    <Corner at="bl" />
    <Corner at="tr" />
  </OutlinerArea>
);

/* ---------- properties ---------- */

const PropertiesArea = styled(Area)`
  display: flex;
  flex-direction: column;
  background: #999;
`;

const Tabs = styled.div`
  display: flex;
  height: 20px;
  margin-left: 8px;
  border-radius: 4px;
  overflow: hidden;
  background: #474747;
`;

const Tab = styled.button<{ $active?: boolean }>`
  display: grid;
  place-items: center;
  width: 20px;
  background: ${(p) => (p.$active ? "#5680c2" : "#4b4b4b")};
  & + & { border-left: 1px solid #333; }
  svg { opacity: ${(p) => (p.$active ? 1 : 0.75)}; }
`;

const PropertiesBody = styled.div`
  flex: 1;
  display: grid;
  grid-template-columns: minmax(0, 1fr) 17px;
`;

const PropertiesScroll = styled.div`
  width: 12px;
  height: 150px;
  margin: 5px 0 0 1px;
  border-radius: 6px;
  background: #b4b4b4;
`;

const PanelStack = styled.div`
  display: flex;
  flex-direction: column;
  min-width: 0;
`;

const PanelFill = styled.div`
  flex: 1;
  background: #bfbfbf;
  border-top: 1px solid #b9b9b9;
`;

const Breadcrumb = styled.div`
  display: flex;
  align-items: center;
  height: 37px;
  padding-left: 8px;
`;

const CrumbIcon = styled.span<{ $gap: number }>`
  margin-right: ${(p) => p.$gap}px;
`;

const NameRow = styled.div`
  display: flex;
  height: 20px;
  margin: 7px 9px 6px;
  border: 1px solid #3a3a3a;
  border-radius: 4px;
  overflow: hidden;
  background: #2e2e2e;
  input { flex: 1; min-width: 0; padding-left: 6px; color: #e6e6e6; outline: 0; }
`;

const BrowseButton = styled.button`
  display: flex;
  align-items: center;
  justify-content: space-between;
  width: 31px;
  padding: 0 3px;
  background: #474747;
  border-right: 1px solid #666;
`;

const PanelHeader = styled.header`
  display: flex;
  align-items: center;
  gap: 4px;
  height: 24px;
  padding: 1px 10px 0 12px;
  background: #bfbfbf;
  color: #1a1a1a;
  & + & { border-top: 1px solid #b9b9b9; }
`;

const PanelTitle = styled.h3`
  flex: 1;
  font-size: 12px;
`;

const PanelBody = styled.div`
  padding: 10px 9px 6px;
`;

const VectorRow = styled.div`
  display: grid;
  grid-template-columns: repeat(3, minmax(0, 1fr));
  gap: 9px;
`;

const VectorGroup = styled.fieldset`
  display: flex;
  flex-direction: column;
  gap: 1px;
  min-width: 0;
  margin: 0;
  padding: 0;
  border: 0;
  legend { padding: 0 0 0 6px; line-height: 20px; }
`;

const ModeRow = styled.div`
  display: flex;
  align-items: center;
  margin-top: 6px;
  label { width: 94px; padding-left: 6px; }
`;

const vectors = [
  { name: "Location:", fields: [[":", "0.00000"], ["Y:", "2.00000"], [":", "0.00000"]] },
  { name: "Rotation:", fields: [["X:", "0°"], ["Y:", "0°"], ["Z:", "0°"]] },
  { name: "Scale:", fields: [["X:", "1.000"], ["Y:", "1.000"], ["Z:", "1.000"]] },
];

const places = ["top", "middle", "bottom"] as const;

const tabs: [string, React.ReactNode][] = [
  ["Render", <CameraTabIcon />],
  ["Render layers", <LayersIcon />],
  ["Scene", <SceneIcon />],
  ["World", <WorldIcon />],
  ["Object", <CubeIcon />],
  ["Constraints", <ChainIcon />],
  ["Modifiers", <WrenchIcon />],
  ["Data", <MeshIcon line="#a0a0a0" dot="#ddd" edge="#222" />],
  ["Material", <MaterialIcon />],
  ["Texture", <TextureIcon />],
  ["Particles", <ParticlesIcon />],
  ["Physics", <PhysicsIcon />],
];

const Properties = () => (
  <PropertiesArea aria-label="Properties">
    <Header>
      <EditorButton type="button" aria-label="Editor type: Properties">
        <PropertiesIcon />
        <UpDownIcon />
      </EditorButton>
      <Tabs>
        {tabs.map(([name, icon]) => (
          <Tab key={name} type="button" aria-label={name} $active={name === "Object"}>
            {icon}
          </Tab>
        ))}
      </Tabs>
    </Header>
    <PropertiesBody>
      <PanelStack>
        <Breadcrumb>
          <CrumbIcon $gap={5}><PinIcon /></CrumbIcon>
          <CrumbIcon $gap={5}><SceneIcon /></CrumbIcon>
          <CrumbIcon $gap={13}><Triangle size={6} /></CrumbIcon>
          <CrumbIcon $gap={5}><CubeIcon /></CrumbIcon>
          instance_slryk_0
        </Breadcrumb>
        <NameRow>
          <BrowseButton type="button" aria-label="Browse objects">
            <CubeIcon />
            <UpDownIcon />
          </BrowseButton>
          <input type="text" aria-label="Object name" defaultValue="instance_slryk_0" />
        </NameRow>
        <PanelHeader>
          <Triangle open size={9} />
          <PanelTitle>Transform</PanelTitle>
          <GripIcon />
        </PanelHeader>
        <PanelBody>
          <VectorRow>
            {vectors.map((v) => (
              <VectorGroup key={v.name}>
                <legend>{v.name}</legend>
                {v.fields.map(([label, value], i) => (
                  <NumberInput key={i} place={places[i]} label={label} value={value} />
                ))}
              </VectorGroup>
            ))}
          </VectorRow>
          <ModeRow>
            <label htmlFor="rotation-mode">Rotation Mode:</label>
            <SelectBox>
              <select id="rotation-mode" defaultValue="XYZ Euler">
                <option>XYZ Euler</option>
              </select>
              <UpDownIcon />
            </SelectBox>
          </ModeRow>
        </PanelBody>
        <PanelHeader>
          <Triangle size={9} />
          <PanelTitle>Delta Transform</PanelTitle>
          <GripIcon />
        </PanelHeader>
        <PanelHeader>
          <Triangle size={9} />
          <PanelTitle>Transform Locks</PanelTitle>
          <GripIcon />
        </PanelHeader>
        <PanelFill />
      </PanelStack>
      <PropertiesScroll />
    </PropertiesBody>
    <Corner at="tr" />
  </PropertiesArea>
);

export default function App() {
  return (
    <>
      <Global />
      <Screen>
        <Column $rows="minmax(346px, 1.14fr) minmax(302px, 1fr)">
          <NodeEditor />
          <View3D />
        </Column>
        <Column $rows="auto minmax(298px, 1fr)">
          <Outliner />
          <Properties />
        </Column>
      </Screen>
    </>
  );
}
